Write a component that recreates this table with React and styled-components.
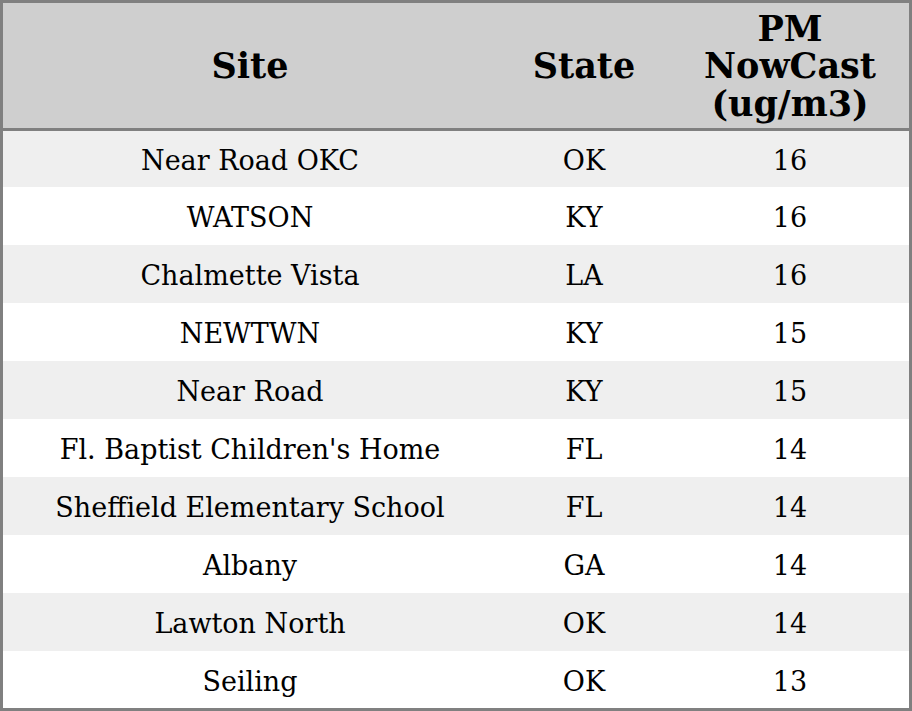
import styled, { createGlobalStyle } from "styled-components";

const rows = [
  { site: "Near Road OKC", state: "OK", pm: 16 },
  { site: "WATSON", state: "KY", pm: 16 },
  { site: "Chalmette Vista", state: "LA", pm: 16 },
  { site: "NEWTWN", state: "KY", pm: 15 },
  { site: "Near Road", state: "KY", pm: 15 },
  { site: "Fl. Baptist Children's Home", state: "FL", pm: 14 },
  { site: "Sheffield Elementary School", state: "FL", pm: 14 },
  { site: "Albany", state: "GA", pm: 14 },
  { site: "Lawton North", state: "OK", pm: 14 },
  { site: "Seiling", state: "OK", pm: 13 },
];

export default function App() {
  return (
    <>
      <GlobalStyle />
      <Table>
        <Header>
          <HeadCell>Site</HeadCell>
          <HeadCell>State</HeadCell>
          <HeadCell>
            PM
            <br />
            NowCast
            <br />
            (ug/m3)
          </HeadCell>
        </Header>
        {rows.map((r, i) => (
          <Row key={i} $striped={i % 2 === 0}>
            <Cell>{r.site}</Cell>
            <Cell>{r.state}</Cell>
            <Cell>{r.pm}</Cell>
          </Row>
        ))}
      </Table>
    </>
  );
}

const GlobalStyle = createGlobalStyle`
  html, body {
    margin: 0;
    padding: 0;
    background: #ffffff;
  }
  body {
    font-family: "DejaVu Serif", serif;
    color: #000;
  }
`;

const Table = styled.div`
  display: flex;
  flex-direction: column;
  width: 912px;
  height: 711px;
  box-sizing: border-box;
  border: 3px solid #808080;
  overflow: hidden;
`;

const Header = styled.div`
  display: grid;
  grid-template-columns: 494px 174px 1fr;
  height: 128px;
  box-sizing: border-box;
  border-bottom: 3px solid #808080;
  background: #cfcfcf;
`;

const HeadCell = styled.div`
  display: flex;
  align-items: center;
  justify-content: center;
  text-align: center;
  font-size: 35px;
  font-weight: bold;
  line-height: 37.5px;
  padding-top: 1px;
`;

const Row = styled.div`
  display: grid;
  grid-template-columns: 494px 174px 1fr;
  height: 58px;
  flex-shrink: 0;
  background: ${(p) => (p.$striped ? "#efefef" : "#ffffff")};

  &:nth-child(2) {
    height: 56px;
  }
  &:last-child {
    height: auto;
    flex: 1;
  }
`;

const Cell = styled.div`
  display: flex;
  align-items: center;
  justify-content: center;
  font-size: 27px;
  padding-top: 3px;
`;
